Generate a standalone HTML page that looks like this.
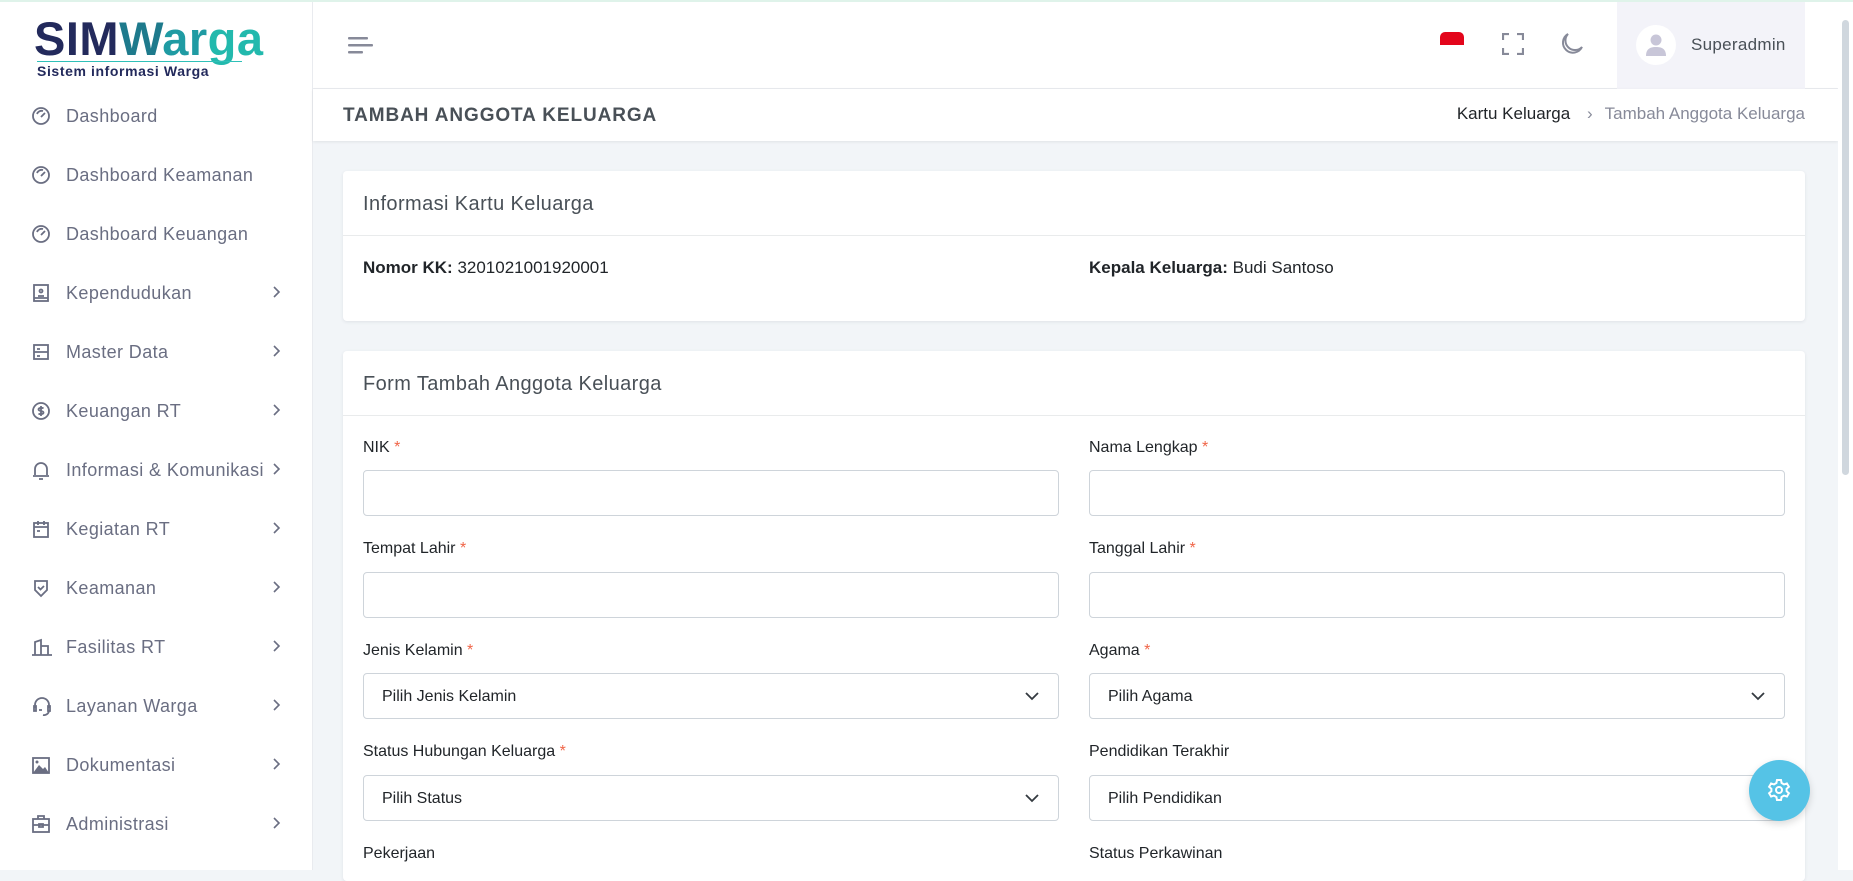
<!DOCTYPE html>
<html><head><meta charset="utf-8"><style>
*{box-sizing:border-box;margin:0;padding:0}
body{width:1853px;height:870px;overflow:hidden;background:#f2f5f8;font-family:"Liberation Sans",sans-serif;position:relative;color:#212529}
.abs{position:absolute}
.topline{left:0;top:0;width:1853px;height:2px;background:#dff3ea}
.side{left:0;top:2px;width:313px;height:868px;background:#fff;border-right:1px solid #e9ebef}
.nav{position:absolute;left:0;width:313px;height:30px;color:#6a6e82;font-size:18px;letter-spacing:.4px}
.nav svg{position:absolute;left:31px;top:5px}
.nav span{position:absolute;left:66px;top:5px}
.nav .ch{position:absolute;left:272px;top:7px}
.hdr{left:313px;top:2px;width:1525px;height:87px;background:#fff;border-bottom:1px solid #e9ebef}
.bc{left:313px;top:89px;width:1525px;height:52px;background:#fff;box-shadow:0 1px 3px rgba(0,0,0,.08)}
.card{background:#fff;border-radius:4px;box-shadow:0 1px 3px rgba(56,65,74,.1)}
.ct{font-size:20px;color:#495057;letter-spacing:.4px}
.lbl{font-size:16px;color:#212529}
.req{color:#f06548}
.inp{height:46px;border:1px solid #ced4da;border-radius:4px;background:#fff}
.sel{font-size:16px;color:#212529;padding:14px 0 0 18px}
.sel svg{position:absolute;right:18px;top:16px}
</style></head><body>
<div class="abs topline"></div>
<div class="abs side">
  <div class="abs" style="left:34px;top:12px;font-size:47px;font-weight:bold;letter-spacing:.5px;line-height:50px"><span style="color:#232a5c">SIM</span><span style="color:#1e7a8c">W</span><span style="color:#1f9ba3">ar</span><span style="color:#22b9ad">ga</span></div>
  <div class="abs" style="left:37px;top:59px;width:205px;height:1px;background:#2fc0b8"></div>
  <div class="abs" style="left:37px;top:61px;font-size:14px;font-weight:bold;color:#232a5c;letter-spacing:.6px">Sistem informasi Warga</div>
</div>
<div class="abs hdr">
  <svg class="abs" style="left:35px;top:34px" width="26" height="20"><rect x="0" y="1" width="20" height="2.5" rx="1" fill="#878a99"/><rect x="0" y="8" width="25" height="2.5" rx="1" fill="#878a99"/><rect x="0" y="15" width="15" height="2.5" rx="1" fill="#878a99"/></svg>
  <div class="abs" style="left:1127px;top:30px;width:24px;height:13px;background:#e3051b;border-radius:5px 5px 0 0"></div>
  <svg class="abs" style="left:1189px;top:31px" width="22" height="22" fill="none" stroke="#878a99" stroke-width="2.2"><path d="M1 7V1h6M15 1h6v6M21 15v6h-6M7 21H1v-6"/></svg>
  <svg class="abs" style="left:1246px;top:30px" width="26" height="26" fill="none" stroke="#878a99" stroke-width="2"><path d="M9 2a10 10 0 1 0 14 13A8.5 8.5 0 0 1 9 2z"/></svg>
  <div class="abs" style="left:1304px;top:0;width:188px;height:87px;background:#f3f3f9">
    <div class="abs" style="left:19px;top:23px;width:40px;height:40px;border-radius:50%;background:#fff"></div>
    <svg class="abs" style="left:28px;top:31px" width="22" height="24"><circle cx="11" cy="7" r="5.5" fill="#c8c6d8"/><path d="M1 23c0-7 4-9 10-9s10 2 10 9z" fill="#c8c6d8"/></svg>
    <div class="abs" style="left:74px;top:33px;font-size:17px;color:#495057;letter-spacing:.3px">Superadmin</div>
  </div>
</div>
<div class="abs bc">
  <div class="abs" style="left:30px;top:16px;font-size:19px;font-weight:bold;color:#495057;letter-spacing:.9px">TAMBAH ANGGOTA KELUARGA</div>
  <div class="abs" style="right:33px;top:15px;font-size:17px;color:#212529;white-space:nowrap">Kartu Keluarga <span style="color:#878a99;margin:0 12px">&#8250;</span><span style="color:#878a99">Tambah Anggota Keluarga</span></div>
</div>
<div class="abs" style="left:1838px;top:2px;width:15px;height:868px;background:#fff"></div>
<div class="abs" style="left:1842px;top:20px;width:7px;height:455px;background:#d0d7de;border-radius:4px"></div>

<div class="abs card" style="left:343px;top:171px;width:1462px;height:150px">
  <div class="abs ct" style="left:20px;top:22px">Informasi Kartu Keluarga</div>
  <div class="abs" style="left:0;top:64px;width:100%;height:1px;background:#e9ebec"></div>
  <div class="abs" style="left:20px;top:87px;font-size:17px"><b>Nomor KK:</b> 3201021001920001</div>
  <div class="abs" style="left:746px;top:87px;font-size:17px"><b>Kepala Keluarga:</b> Budi Santoso</div>
</div>

<div class="abs card" style="left:343px;top:351px;width:1462px;height:530px">
  <div class="abs ct" style="left:20px;top:22px">Form Tambah Anggota Keluarga</div>
  <div class="abs" style="left:0;top:64px;width:100%;height:1px;background:#e9ebec"></div>
</div>
<div class="abs lbl" style="left:363px;top:439px">NIK <span class="req">*</span></div>
<div class="abs lbl" style="left:1089px;top:439px">Nama Lengkap <span class="req">*</span></div>
<div class="abs inp" style="left:363px;top:470px;width:696px"></div>
<div class="abs inp" style="left:1089px;top:470px;width:696px"></div>

<div class="abs lbl" style="left:363px;top:540px">Tempat Lahir <span class="req">*</span></div>
<div class="abs lbl" style="left:1089px;top:540px">Tanggal Lahir <span class="req">*</span></div>
<div class="abs inp" style="left:363px;top:572px;width:696px"></div>
<div class="abs inp" style="left:1089px;top:572px;width:696px"></div>

<div class="abs lbl" style="left:363px;top:642px">Jenis Kelamin <span class="req">*</span></div>
<div class="abs lbl" style="left:1089px;top:642px">Agama <span class="req">*</span></div>
<div class="abs inp sel" style="left:363px;top:673px;width:696px">Pilih Jenis Kelamin<svg width="16" height="12" fill="none" stroke="#343a40" stroke-width="1.8"><path d="M2 3l6 6 6-6"/></svg></div>
<div class="abs inp sel" style="left:1089px;top:673px;width:696px">Pilih Agama<svg width="16" height="12" fill="none" stroke="#343a40" stroke-width="1.8"><path d="M2 3l6 6 6-6"/></svg></div>

<div class="abs lbl" style="left:363px;top:743px">Status Hubungan Keluarga <span class="req">*</span></div>
<div class="abs lbl" style="left:1089px;top:743px">Pendidikan Terakhir</div>
<div class="abs inp sel" style="left:363px;top:775px;width:696px">Pilih Status<svg width="16" height="12" fill="none" stroke="#343a40" stroke-width="1.8"><path d="M2 3l6 6 6-6"/></svg></div>
<div class="abs inp sel" style="left:1089px;top:775px;width:696px">Pilih Pendidikan</div>

<div class="abs lbl" style="left:363px;top:845px">Pekerjaan</div>
<div class="abs lbl" style="left:1089px;top:845px">Status Perkawinan</div>

<div class="abs" style="left:1749px;top:760px;width:61px;height:61px;border-radius:50%;background:#55c3e6;box-shadow:0 3px 8px rgba(0,0,0,.15)"></div>
<svg class="abs" style="left:1767px;top:778px" width="24" height="24" fill="none" stroke="#fff" stroke-width="2"><circle cx="12" cy="12" r="3"/><path d="M10 2h4l.6 3 2.4 1.4 2.9-1 2 3.4-2.3 2v2.4l2.3 2-2 3.4-2.9-1L14.6 19 14 22h-4l-.6-3-2.4-1.4-2.9 1-2-3.4 2.3-2v-2.4l-2.3-2 2-3.4 2.9 1L9.4 5z"/></svg>

<div class="nav" style="top:101px"><svg width="20" height="20" fill="none" stroke="#6a6e82" stroke-width="1.8"><circle cx="10" cy="10" r="8"/><path d="M10 11l4-4M6 8a5 5 0 0 1 6-3"/></svg><span>Dashboard</span></div>
<div class="nav" style="top:160px"><svg width="20" height="20" fill="none" stroke="#6a6e82" stroke-width="1.8"><circle cx="10" cy="10" r="8"/><path d="M10 11l4-4M6 8a5 5 0 0 1 6-3"/></svg><span>Dashboard Keamanan</span></div>
<div class="nav" style="top:219px"><svg width="20" height="20" fill="none" stroke="#6a6e82" stroke-width="1.8"><circle cx="10" cy="10" r="8"/><path d="M10 11l4-4M6 8a5 5 0 0 1 6-3"/></svg><span>Dashboard Keuangan</span></div>
<div class="nav" style="top:278px"><svg width="20" height="20" fill="none" stroke="#6a6e82" stroke-width="1.8"><rect x="3" y="2" width="14" height="16"/><circle cx="10" cy="8" r="1.5"/><path d="M7 13h6M3 15h14"/></svg><span>Kependudukan</span><svg class="ch" width="10" height="14" fill="none" stroke="#6a6e82" stroke-width="1.6"><path d="M2 2l5 5-5 5"/></svg></div>
<div class="nav" style="top:337px"><svg width="20" height="20" fill="none" stroke="#6a6e82" stroke-width="1.8"><rect x="3" y="3" width="14" height="14"/><path d="M3 10h14M6 7h3M6 14h3"/></svg><span>Master Data</span><svg class="ch" width="10" height="14" fill="none" stroke="#6a6e82" stroke-width="1.6"><path d="M2 2l5 5-5 5"/></svg></div>
<div class="nav" style="top:396px"><svg width="20" height="20" fill="none" stroke="#6a6e82" stroke-width="1.8"><circle cx="10" cy="10" r="8"/><path d="M12.5 7.5c-1-1-5-1-5 1s5 1 5 3-4 2-5 1M10 5v10"/></svg><span>Keuangan RT</span><svg class="ch" width="10" height="14" fill="none" stroke="#6a6e82" stroke-width="1.6"><path d="M2 2l5 5-5 5"/></svg></div>
<div class="nav" style="top:455px"><svg width="20" height="20" fill="none" stroke="#6a6e82" stroke-width="1.8"><path d="M4 15V9a6 6 0 0 1 12 0v6M2 16h16M8 19h4"/></svg><span>Informasi &amp; Komunikasi</span><svg class="ch" width="10" height="14" fill="none" stroke="#6a6e82" stroke-width="1.6"><path d="M2 2l5 5-5 5"/></svg></div>
<div class="nav" style="top:514px"><svg width="20" height="20" fill="none" stroke="#6a6e82" stroke-width="1.8"><rect x="3" y="4" width="14" height="14"/><path d="M3 8h14M7 2v4M13 2v4M6 12h3"/></svg><span>Kegiatan RT</span><svg class="ch" width="10" height="14" fill="none" stroke="#6a6e82" stroke-width="1.6"><path d="M2 2l5 5-5 5"/></svg></div>
<div class="nav" style="top:573px"><svg width="20" height="20" fill="none" stroke="#6a6e82" stroke-width="1.8"><path d="M4 3h12v9l-6 6-6-6z"/><path d="M7 9l2.5 2.5L13 8"/></svg><span>Keamanan</span><svg class="ch" width="10" height="14" fill="none" stroke="#6a6e82" stroke-width="1.6"><path d="M2 2l5 5-5 5"/></svg></div>
<div class="nav" style="top:632px"><svg width="22" height="20" fill="none" stroke="#6a6e82" stroke-width="1.8"><path d="M1 18h20M4 18V5l6-2v15M10 9h7v9"/></svg><span>Fasilitas RT</span><svg class="ch" width="10" height="14" fill="none" stroke="#6a6e82" stroke-width="1.6"><path d="M2 2l5 5-5 5"/></svg></div>
<div class="nav" style="top:691px"><svg width="22" height="20" fill="none" stroke="#6a6e82" stroke-width="1.8"><path d="M4 12V9a7 7 0 0 1 14 0v3M3 10h2v5H3zM17 10h2v5h-2zM18 15a5 5 0 0 1-6 4M8 14h3"/></svg><span>Layanan Warga</span><svg class="ch" width="10" height="14" fill="none" stroke="#6a6e82" stroke-width="1.6"><path d="M2 2l5 5-5 5"/></svg></div>
<div class="nav" style="top:750px"><svg width="20" height="20"><rect x="2" y="3" width="16" height="15" fill="none" stroke="#6a6e82" stroke-width="1.8"/><path d="M2 18l6-8 4 4 2-2 4 6z" fill="#6a6e82"/><circle cx="6" cy="7" r="1.5" fill="#6a6e82"/></svg><span>Dokumentasi</span><svg class="ch" width="10" height="14" fill="none" stroke="#6a6e82" stroke-width="1.6"><path d="M2 2l5 5-5 5"/></svg></div>
<div class="nav" style="top:809px"><svg width="20" height="20" fill="none" stroke="#6a6e82" stroke-width="1.8"><rect x="2" y="5" width="16" height="13"/><path d="M7 5V2h6v3M2 11h16M8 10h4v3H8z"/></svg><span>Administrasi</span><svg class="ch" width="10" height="14" fill="none" stroke="#6a6e82" stroke-width="1.6"><path d="M2 2l5 5-5 5"/></svg></div>
</body></html>
